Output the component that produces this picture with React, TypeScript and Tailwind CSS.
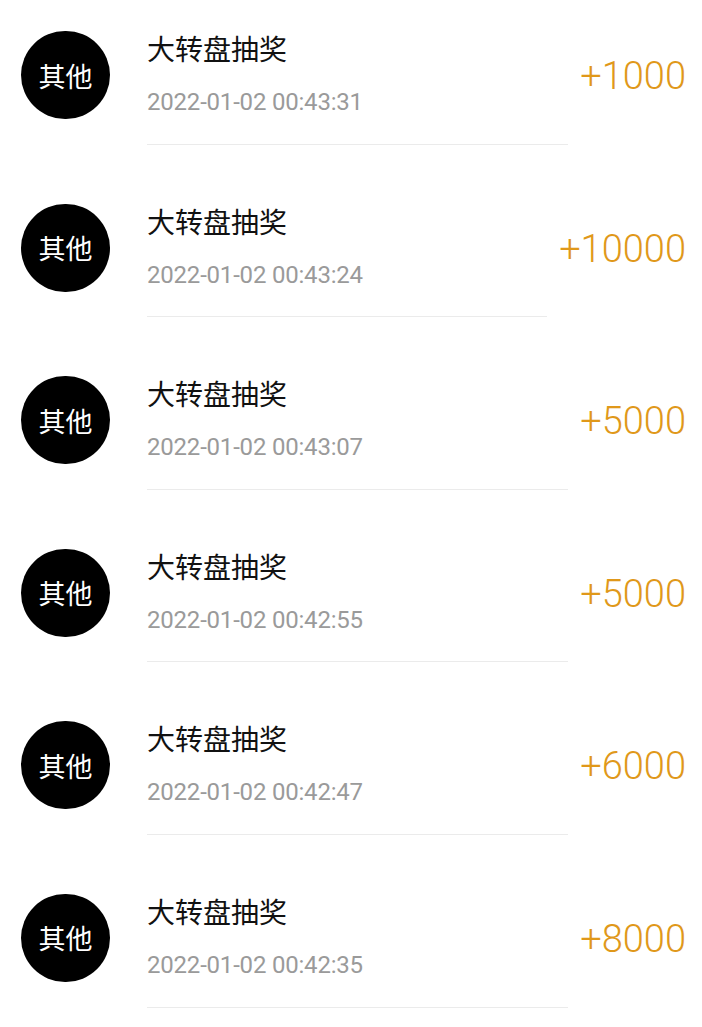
const records = [
  { time: '2022-01-02 00:43:31', amount: 1000 },
  { time: '2022-01-02 00:43:24', amount: 10000 },
  { time: '2022-01-02 00:43:07', amount: 5000 },
  { time: '2022-01-02 00:42:55', amount: 5000 },
  { time: '2022-01-02 00:42:47', amount: 6000 },
  { time: '2022-01-02 00:42:35', amount: 8000 },
];

const cjk = { fontFamily: '"Noto Sans CJK SC", "Noto Sans", sans-serif' };
const num = { fontFamily: 'Roboto, "Noto Sans CJK SC", sans-serif' };

const Row = ({ time, amount }: { time: string; amount: number }) => (
  <div className="flex h-[172.6px] pl-[21px] pr-[16px]">
    <div
      className="mt-[59px] w-[89px] h-[88px] shrink-0 rounded-full bg-black text-white text-[27px] leading-none flex items-center justify-center"
      style={cjk}
    >
      其他
    </div>
    <div className="ml-[37px] flex-1 border-b border-[#ebebeb]">
      <div className="mt-[62px] text-[28px] leading-none text-[#111]" style={cjk}>
        大转盘抽奖
      </div>
      <div className="mt-[28px] text-[24px] leading-none text-[#9a9a9a] tracking-[-0.2px]" style={num}>
        {time}
      </div>
    </div>
    <div
      className="ml-3 mt-[85px] h-[40px] text-[38px] leading-none font-light text-[#e0981a]"
      style={num}
    >
      +{amount}
    </div>
  </div>
);

export default function App() {
  return (
    <div className="w-[702px] h-[1027px] overflow-hidden bg-white">
      <div className="-mt-[28px]">
        {records.map((r, i) => (
          <Row key={i} {...r} />
        ))}
      </div>
    </div>
  );
}
